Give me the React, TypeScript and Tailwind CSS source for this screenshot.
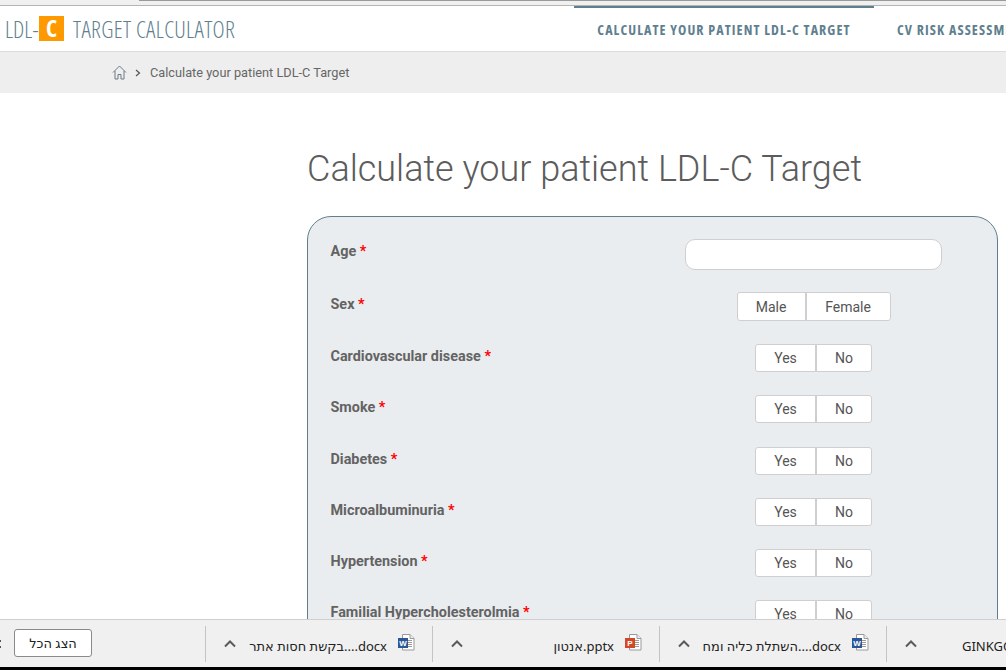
import React from "react";

const Chevron = () => (
  <svg width="12" height="8" viewBox="0 0 12 8" className="shrink-0" fill="none" stroke="#5a5a5a" strokeWidth="2">
    <path d="M1 6.5 L6 1.5 L11 6.5" />
  </svg>
);

const FileIcon = ({ letter, color }: { letter: string; color: string }) => (
  <svg width="17" height="17" viewBox="0 0 17 17" className="shrink-0" fill="none">
    <path d="M4.5 .5 H12 L16 4.5 V16 H4.5 Z" fill="#fff" stroke="#9a9a9a" />
    <path d="M12 .5 V4.5 H16" stroke="#9a9a9a" fill="#eee" />
    <path d="M9 6.5 H14 M9 8.5 H14 M9 10.5 H14 M9 12.5 H14" stroke="#9a9a9a" />
    <rect x="0" y="4" width="10" height="10" fill={color} />
    <text x="5" y="12" fontSize="8" fontWeight="700" fontFamily="Liberation Sans, sans-serif" textAnchor="middle" fill="#fff">{letter}</text>
  </svg>
);

const Download = ({ name, letter, color }: { name: string; letter: string; color: string }) => (
  <div className="w-[227px] shrink-0 h-[36px] border-l border-[#c4c4c4] flex items-center pl-[18px] pr-[17px]">
    <Chevron />
    <span dir="ltr" className="ml-auto text-[13px] text-[#222] whitespace-nowrap [font-family:'Noto_Sans','DejaVu_Sans',sans-serif] leading-none mt-[5px]">{name}</span>
    <span className="ml-[11px] -mt-[3px] flex"><FileIcon letter={letter} color={color} /></span>
  </div>
);

const Label = ({ text }: { text: string }) => (
  <div className="text-[14.4px] font-bold text-[#636363] leading-[20px] -mt-[1px]">
    {text} <span className="text-[#ff0000]">*</span>
  </div>
);

const Toggle = ({ a, b, wa, wb, h }: { a: string; b: string; wa: string; wb: string; h: string }) => (
  <div className={`flex ${h} text-[14px] text-[#555] bg-white rounded-[3px] border border-[#cfcfcf] leading-none`}>
    <div className={`${wa} flex items-center justify-center border-r-2 border-[#cfcfcf]`}>{a}</div>
    <div className={`${wb} flex items-center justify-center`}>{b}</div>
  </div>
);

const rows = ["Cardiovascular disease", "Smoke", "Diabetes", "Microalbuminuria", "Hypertension", "Familial Hypercholesterolmia"];

export default function App() {
  return (
    <div className="w-[1006px] h-[670px] overflow-hidden flex flex-col bg-white [font-family:Roboto,sans-serif]">
      <div className="h-[6px] shrink-0 bg-[#f0f0f0] border-b border-[#b5b5b5] flex justify-end">
        <div className="w-[867px] h-px bg-[#9a9a9a]" />
      </div>
      <header className="h-[46px] shrink-0 bg-white border-b border-[#dcdcdc] flex items-start relative z-10 overflow-hidden">
        <div className="flex items-center h-[25px] mt-[10px] pl-[5px] w-[574px] shrink-0 [font-family:'Open_Sans',sans-serif] text-[#5f7f8f] text-[23px] font-light [font-stretch:75%] whitespace-nowrap">
          <span className="w-[34px] pt-[1px]">LDL-</span>
          <span className="w-[25px] h-[25px] bg-[#ff9900] text-white font-bold flex items-center justify-center text-[23px]">C</span>
          <span className="ml-[9px] pt-[1px] tracking-[0.32px]">TARGET CALCULATOR</span>
        </div>
        <div className="w-[300px] shrink-0 border-t-2 border-[#5f7f8f] h-[46px] text-center pt-[11px] [font-family:'Open_Sans',sans-serif] font-bold text-[14px] [font-stretch:75%] tracking-[1.1px] text-[#5f7f8f] whitespace-nowrap">
          CALCULATE YOUR PATIENT LDL-C TARGET
        </div>
        <div className="pl-[23px] pt-[13px] [font-family:'Open_Sans',sans-serif] font-bold text-[14px] [font-stretch:75%] tracking-[1.1px] text-[#5f7f8f] whitespace-nowrap">
          CV RISK ASSESSMENT
        </div>
      </header>
      <div className="h-[41px] shrink-0 bg-[#eeeeee] flex items-center pl-[112px] text-[12.75px] text-[#666]">
        <svg width="15" height="15" viewBox="0 0 14 15" fill="none" stroke="#6b7b85" strokeWidth="1">
          <path d="M.5 7.5 L7 1 L13.5 7.5 M2.5 6 V14 H5.5 V9.5 H8.5 V14 H11.5 V6" />
        </svg>
        <svg width="6" height="8" viewBox="0 0 6 8" fill="none" stroke="#555" strokeWidth="1.2" className="ml-[8px]">
          <path d="M1 1 L4.5 4 L1 7" />
        </svg>
        <span className="ml-[9px] mt-[1px]">Calculate your patient LDL-C Target</span>
      </div>
      <main className="flex-1 min-h-0 overflow-hidden pl-[307px] pr-[8px] pt-[54px]">
        <h1 className="text-[36px] font-light text-[#5c5c5c] leading-[44px] whitespace-nowrap">Calculate your patient LDL-C Target</h1>
        <div className="mt-[25px] h-[600px] bg-[#eaedf0] border border-[#5f7f8f] rounded-[24px] pl-[22.5px] pt-[22px]">
          <div className="flex h-[53px]">
            <div className="w-[354.5px] mt-[4px]"><Label text="Age" /></div>
            <div className="w-[257px] h-[31px] bg-white border border-[#cfcfcf] rounded-[10px]" />
          </div>
          <div className="flex h-[52px]">
            <div className="w-[354.5px] mt-[4px]"><Label text="Sex" /></div>
            <div className="w-[257px] flex justify-center"><Toggle h="h-[29px]" a="Male" b="Female" wa="w-[69px]" wb="w-[83px]" /></div>
          </div>
          {rows.map((r) => (
            <div key={r} className="flex h-[51.25px]">
              <div className="w-[354.5px] mt-[4px]"><Label text={r} /></div>
              <div className="w-[257px] flex justify-center"><Toggle h="h-[28px]" a="Yes" b="No" wa="w-[61px]" wb="w-[54px]" /></div>
            </div>
          ))}
        </div>
      </main>
      <footer className="h-[48px] shrink-0 bg-[#f0f0f0] border-t border-[#cfcfcf] flex items-start pt-[6px] overflow-hidden relative z-10">
        <div className="w-[205px] shrink-0 flex items-center h-[36px]">
          <div className="w-[1px] flex flex-col gap-[4px] shrink-0">
            <div className="h-[2px] bg-[#555]" />
            <div className="h-[2px] bg-[#555]" />
          </div>
          <div className="ml-[13px] -mt-[2px] w-[78px] h-[28px] bg-white border border-[#8a8a8a] rounded-[3px] flex items-center justify-center text-[13px] text-[#222] [font-family:'Noto_Sans','DejaVu_Sans',sans-serif] leading-none" dir="rtl">הצג הכל</div>
        </div>
        <Download name="בקשת חסות אתר....docx" letter="W" color="#2b5797" />
        <Download name="אנטון.pptx" letter="P" color="#d24726" />
        <Download name="השתלת כליה ומח....docx" letter="W" color="#2b5797" />
        <div className="w-[120px] shrink-0 h-[36px] border-l border-[#c4c4c4] flex items-center pl-[18px]">
          <Chevron />
          <span className="ml-[45px] mt-[5px] text-[13px] text-[#222] leading-none [font-family:'Noto_Sans',sans-serif]">GINKGO</span>
        </div>
      </footer>
      <div className="h-[3px] shrink-0 bg-black" />
    </div>
  );
}
